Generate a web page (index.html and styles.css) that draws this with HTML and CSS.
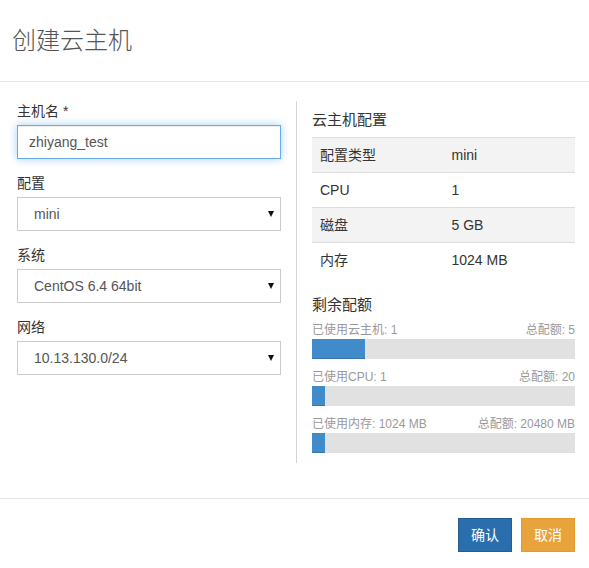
FILE: index.html
```html
<!DOCTYPE html>
<html lang="zh-CN">
<head>
<meta charset="utf-8">
<title>创建云主机</title>
<link rel="stylesheet" href="styles.css">
</head>
<body>
<div class="modal">
  <div class="modal-header">
    <h4 class="modal-title">创建云主机</h4>
  </div>
  <div class="modal-body">
    <form class="form-col">
      <div class="form-group">
        <label class="form-label">主机名 *</label>
        <input class="form-control is-focused" type="text" value="zhiyang_test">
      </div>
      <div class="form-group">
        <label class="form-label">配置</label>
        <div class="select-wrap">
          <select class="form-control form-select"><option>mini</option></select>
        </div>
      </div>
      <div class="form-group">
        <label class="form-label">系统</label>
        <div class="select-wrap">
          <select class="form-control form-select"><option>CentOS 6.4 64bit</option></select>
        </div>
      </div>
      <div class="form-group">
        <label class="form-label">网络</label>
        <div class="select-wrap">
          <select class="form-control form-select"><option>10.13.130.0/24</option></select>
        </div>
      </div>
    </form>
    <div class="info-col">
      <h5 class="section-title">云主机配置</h5>
      <table class="spec-table">
        <tr><td>配置类型</td><td>mini</td></tr>
        <tr><td>CPU</td><td>1</td></tr>
        <tr><td>磁盘</td><td>5 GB</td></tr>
        <tr><td>内存</td><td>1024 MB</td></tr>
      </table>
      <h5 class="section-title">剩余配额</h5>
      <div class="quota">
        <div class="quota-label"><span>已使用云主机: 1</span><span>总配额: 5</span></div>
        <div class="progress"><div class="progress-bar" style="width:20%"></div></div>
      </div>
      <div class="quota">
        <div class="quota-label"><span>已使用CPU: 1</span><span>总配额: 20</span></div>
        <div class="progress"><div class="progress-bar" style="width:5%"></div></div>
      </div>
      <div class="quota">
        <div class="quota-label"><span>已使用内存: 1024 MB</span><span>总配额: 20480 MB</span></div>
        <div class="progress"><div class="progress-bar" style="width:5%"></div></div>
      </div>
    </div>
  </div>
  <div class="modal-footer">
    <button class="btn btn-primary" type="button">确认</button>
    <button class="btn btn-warning" type="button">取消</button>
  </div>
</div>
</body>
</html>
```
FILE: styles.css
```css
* {
  box-sizing: border-box;
}

html, body {
  margin: 0;
  padding: 0;
  background: #fff;
}

body {
  font-family: "Liberation Sans", "Noto Sans CJK SC", sans-serif;
  font-size: 14px;
  color: #333;
}

.modal {
  width: 589px;
}

.modal-header {
  height: 82px;
  padding: 24px 12px 0 12px;
  border-bottom: 1px solid #e5e5e5;
}

.modal-title {
  margin: 0;
  font-size: 24px;
  line-height: 34px;
  font-weight: 300;
  color: #555;
}

.modal-body {
  display: flex;
  padding: 19px 14px 35px 17px;
}

.form-col {
  width: 264px;
  flex: none;
  margin: 0;
}

.form-group {
  margin-bottom: 14px;
}

.form-label {
  display: block;
  line-height: 20px;
  margin-bottom: 4px;
  font-weight: normal;
  color: #333;
}

.form-control {
  display: block;
  width: 100%;
  height: 34px;
  margin: 0;
  padding: 6px 11px;
  font-family: inherit;
  font-size: 14px;
  line-height: 20px;
  color: #555;
  background: #fff;
  border: 1px solid #ccc;
  border-radius: 0;
  outline: none;
}

.is-focused {
  border-color: #66afe9;
  box-shadow: inset 0 1px 1px rgba(0, 0, 0, .075), 0 0 8px rgba(102, 175, 233, .6);
}

.select-wrap {
  position: relative;
}

.form-select {
  -webkit-appearance: none;
  appearance: none;
  padding-left: 16px;
  padding-right: 24px;
}

.select-wrap::after {
  content: "";
  position: absolute;
  right: 7px;
  top: 14px;
  border-left: 3.5px solid transparent;
  border-right: 3.5px solid transparent;
  border-top: 6px solid #111;
  pointer-events: none;
}

.info-col {
  flex: 1;
  margin-left: 15px;
  padding-left: 15px;
  padding-top: 8px;
  border-left: 1px solid #d4d4d4;
}

.section-title {
  margin: 0 0 6px;
  font-size: 15px;
  line-height: 22px;
  font-weight: normal;
  color: #333;
}

.spec-table {
  width: 100%;
  border-collapse: collapse;
  margin-bottom: 17px;
}

.spec-table td {
  width: 50%;
  padding: 8px;
  line-height: 18px;
  border-top: 1px solid #ddd;
  color: #333;
}

.spec-table tr:nth-child(odd) {
  background: #f3f3f3;
}

.quota {
  margin-bottom: 10px;
}

.quota-label {
  display: flex;
  justify-content: space-between;
  font-size: 12px;
  line-height: 17px;
  color: #999;
}

.progress {
  height: 20px;
  background: #e1e1e1;
}

.progress-bar {
  height: 100%;
  background: #428bca;
  box-shadow: inset 0 -1px 0 rgba(0, 0, 0, .15);
}

.modal-footer {
  display: flex;
  justify-content: flex-end;
  gap: 9px;
  padding: 19px 14px 16px;
  border-top: 1px solid #e5e5e5;
}

.btn {
  height: 34px;
  padding: 6px 12px;
  font-family: inherit;
  font-size: 14px;
  line-height: 20px;
  color: #fff;
  border: 1px solid transparent;
  border-radius: 0;
  cursor: pointer;
}

.btn-primary {
  background: #2a6ead;
  border-color: #235d93;
}

.btn-warning {
  background: #e8a33d;
  border-color: #e49b2c;
}
```
